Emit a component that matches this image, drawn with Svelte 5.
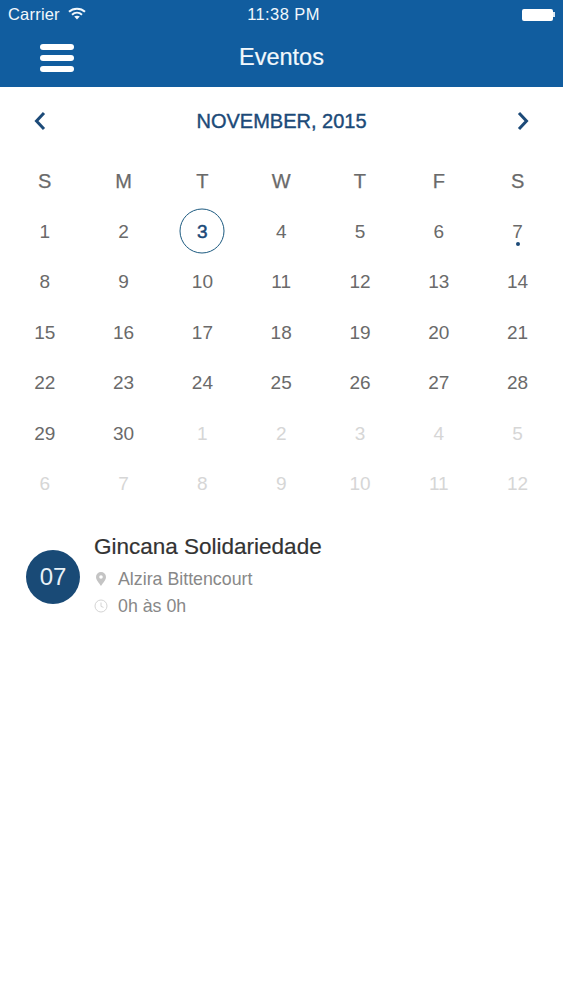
<script>
    const weekdays = ['S', 'M', 'T', 'W', 'T', 'F', 'S'];

    // Six rows always: the tail of the month is padded with the next one, greyed out.
    const days = [
        ...Array.from({ length: 30 }, (_, i) => ({ n: i + 1, muted: false })),
        ...Array.from({ length: 12 }, (_, i) => ({ n: i + 1, muted: true }))
    ];
</script>

<div class="screen">
    <header class="top">
        <div class="status">
            <div class="carrier">
                <span>Carrier</span>
                <svg class="wifi" viewBox="0 0 18 13" width="18" height="13" aria-hidden="true">
                    <path d="M1 4.800C5.300.6 12.700.6 17 4.800" fill="none" stroke="currentColor" stroke-width="2" />
                    <path d="M4 7.800c2.900-2.600 7.100-2.600 10 0" fill="none" stroke="currentColor" stroke-width="2" />
                    <path d="M6.200 9.600c1.600-1.200 4-1.200 5.600 0L9 12.600z" fill="currentColor" />
                </svg>
            </div>
            <div class="clock">11:38 PM</div>
            <div class="battery"><span class="cell"></span><span class="nub"></span></div>
        </div>
        <div class="nav">
            <button class="burger" aria-label="Menu"><span></span><span></span><span></span></button>
            <h1>Eventos</h1>
        </div>
    </header>

    <div class="month">
        <svg viewBox="0 0 14 20" width="14" height="20" aria-hidden="true">
            <path d="M11 2 3.500 10 11 18" fill="none" stroke="currentColor" stroke-width="3" />
        </svg>
        <h2>NOVEMBER, 2015</h2>
        <svg viewBox="0 0 14 20" width="14" height="20" aria-hidden="true">
            <path d="M3 2l7.500 8L3 18" fill="none" stroke="currentColor" stroke-width="3" />
        </svg>
    </div>

    <div class="grid">
        {#each weekdays as day}
            <div class="weekday">{day}</div>
        {/each}
        {#each days as day}
            <div class="day" class:muted={day.muted} class:today={day.n === 3 && !day.muted}>
                <span>{day.n}</span>
                {#if day.n === 7 && !day.muted}<i class="dot"></i>{/if}
            </div>
        {/each}
    </div>

    <div class="event">
        <div class="badge">07</div>
        <div class="info">
            <div class="title">Gincana Solidariedade</div>
            <div class="line">
                <svg class="pin" viewBox="0 0 10 14" width="14" height="14" aria-hidden="true">
                    <path fill-rule="evenodd" d="M5 0a5 5 0 0 1 5 5c0 3.200-3.200 6-5 9-1.800-3-5-5.800-5-9a5 5 0 0 1 5-5zm0 3.200a1.800 1.800 0 1 0 0 3.600 1.800 1.800 0 0 0 0-3.600z" fill="currentColor" />
                </svg>
                <span>Alzira Bittencourt</span>
            </div>
            <div class="line">
                <svg viewBox="0 0 14 14" width="14" height="14" aria-hidden="true">
                    <circle cx="7" cy="7" r="6" fill="none" stroke="currentColor" stroke-width="1" />
                    <path d="M7 3.500V7.400L9.500 8.400" fill="none" stroke="currentColor" stroke-width="1" />
                </svg>
                <span>0h às 0h</span>
            </div>
        </div>
    </div>
</div>

<style>
    :global(body) {
        margin: 0;
        background: #fff;
    }

    .screen {
        height: 1000px;
        overflow: hidden;
        font-family: "Liberation Sans", Arial, sans-serif;
    }

    .top {
        height: 87px;
        background: #115d9f;
        color: #f2f8fc;
    }

    .status {
        display: grid;
        grid-template-columns: 1fr auto 1fr;
        align-items: center;
        height: 29px;
        padding: 0 8px;
        font-size: 16.500px;
    }

    .carrier {
        display: flex;
        align-items: center;
        gap: 8px;
        letter-spacing: 0.2px;
    }

    .wifi {
        margin-top: -2px;
    }

    .clock {
        margin-left: 4px;
        letter-spacing: 0.4px;
    }

    .battery {
        justify-self: end;
        display: flex;
        align-items: center;
    }

    .cell {
        width: 31px;
        height: 12px;
        border-radius: 2px;
        background: #fff;
    }

    .nub {
        width: 2px;
        height: 5px;
        background: #dce9f3;
    }

    .nav {
        position: relative;
        display: flex;
        justify-content: center;
        align-items: center;
        height: 58px;
    }

    h1 {
        margin: -2px 0 0;
        font-size: 23.500px;
        font-weight: 400;
        -webkit-text-stroke: 0.2px currentColor;
    }

    .burger {
        position: absolute;
        left: 40px;
        top: 15px;
        display: flex;
        flex-direction: column;
        gap: 5px;
        padding: 0;
        border: none;
        background: none;
    }

    .burger span {
        width: 34px;
        height: 6px;
        border-radius: 3px;
        background: #fff;
    }

    .month {
        display: flex;
        justify-content: space-between;
        align-items: center;
        height: 68px;
        padding: 0 33px;
        color: #1c4a78;
    }

    h2 {
        margin: 0;
        font-size: 20px;
        font-weight: 400;
        -webkit-text-stroke: 0.4px currentColor;
    }

    .grid {
        display: grid;
        grid-template-columns: repeat(7, 78.800px);
        grid-auto-rows: 50.500px;
        margin-top: 1px;
        padding-left: 5.400px;
        color: #6a6a6a;
        font-size: 19px;
    }

    .weekday,
    .day {
        position: relative;
        display: flex;
        justify-content: center;
        align-items: center;
    }

    .weekday {
        font-size: 20px;
        -webkit-text-stroke: 0.25px currentColor;
    }

    .day.muted {
        color: #d6d6d6;
    }

    .today {
        color: #1c4a78;
        -webkit-text-stroke: 0.5px currentColor;
    }

    .today::before {
        content: '';
        position: absolute;
        left: 50%;
        top: calc(50% - 1px);
        width: 43px;
        height: 43px;
        border: 1.500px solid #1c5a80;
        border-radius: 50%;
        transform: translate(-50%, -50%);
    }

    .dot {
        position: absolute;
        left: 50%;
        top: 35px;
        width: 4px;
        height: 4px;
        margin-left: -2px;
        border-radius: 50%;
        background: #1c4a78;
    }

    .event {
        display: flex;
        align-items: center;
        gap: 14px;
        margin-top: 24px;
        padding-left: 26px;
    }

    .badge {
        display: grid;
        place-items: center;
        width: 54px;
        height: 54px;
        border-radius: 50%;
        background: #194a76;
        color: #e8f1f7;
        font-size: 24px;
    }

    .title {
        height: 24px;
        line-height: 24px;
        padding-top: 1px;
        margin-bottom: 7px;
        font-size: 22.500px;
        color: #333;
        white-space: nowrap;
        -webkit-text-stroke: 0.2px currentColor;
    }

    .line {
        display: flex;
        align-items: center;
        gap: 10px;
        height: 27px;
        font-size: 17.800px;
        color: #888;
    }

    .line svg {
        flex: 0 0 14px;
        color: #d4d4d4;
    }

    .line svg.pin {
        color: #c4c4c4;
    }
</style>
